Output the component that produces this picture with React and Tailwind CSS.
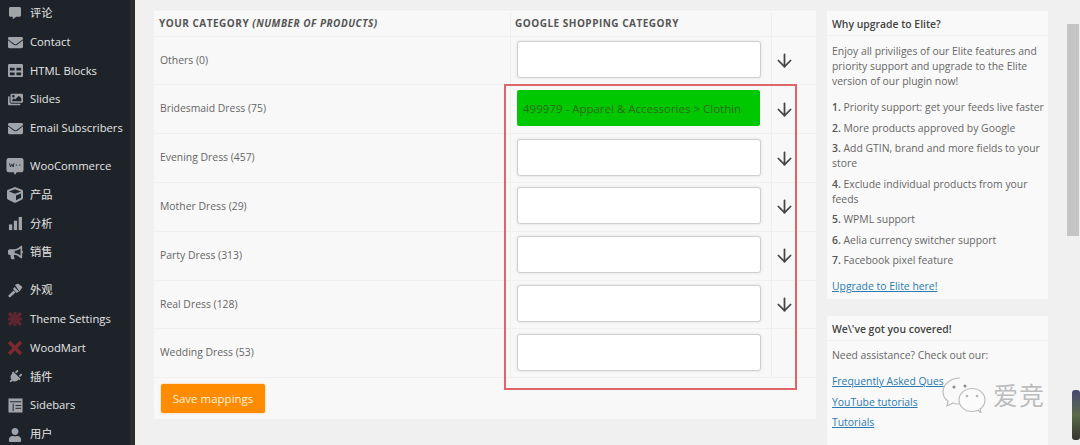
import { ArrowDown } from 'lucide-react';
import { FaCommentAlt, FaEnvelope, FaTable, FaImages, FaCube, FaBullhorn, FaPlug, FaUser } from 'react-icons/fa';

const cjk = "font-['Open_Sans','Noto_Sans_CJK_SC',sans-serif]";

function WooIcon() {
  return (
    <svg viewBox="0 0 20 20" className="h-[18px] w-[18px]" fill="currentColor">
      <path d="M3 1h14a2.500 2.500 0 0 1 2.500 2.500v11A2.500 2.500 0 0 1 17 17h-5l-2 3-1.500-3H3A2.500 2.500 0 0 1 .5 14.500v-11A2.500 2.500 0 0 1 3 1z" />
      <path d="M4 7l1 4 1.500-3 1.500 3 1-4M11 9h1.500M14.500 9H16" stroke="#1f242b" strokeWidth="1" fill="none" />
    </svg>
  );
}

function BarsIcon() {
  return (
    <svg viewBox="0 0 16 16" className="h-[15px] w-[15px]" fill="currentColor">
      <rect x="1" y="9" width="3.500" height="6" />
      <rect x="6.200" y="5" width="3.500" height="10" />
      <rect x="11.400" y="1" width="3.500" height="14" />
    </svg>
  );
}

function BrushIcon() {
  return (
    <svg viewBox="0 0 16 16" className="h-[16px] w-[16px]" fill="currentColor">
      <path d="M8 2l3-1.500 4.500 3.500-3 4.500z" />
      <path d="M7.500 4L12 8.500 9.500 10 6 6z" />
      <path d="M6.500 7.500L8.500 9.500 3 14.500 1 13z" />
    </svg>
  );
}

function SidebarsIcon() {
  return (
    <svg viewBox="0 0 16 16" className="h-[15px] w-[15px]">
      <rect x="0.500" y="0.500" width="15" height="15" fill="#a0a4a8" />
      <path d="M2 4h12M5.500 6v8M8 8h6M8 11h6" stroke="#1f242b" strokeWidth="1" fill="none" />
    </svg>
  );
}

function RedMark({ filled }) {
  return (
    <svg viewBox="0 0 16 16" className="h-[16px] w-[16px]" fill="none" stroke={filled ? '#5e2630' : '#7a2a30'} strokeWidth="3.500">
      <path d="M2 2l12 12M14 2L2 14" />
      {filled && <path d="M8 1v14M1 8h14" strokeWidth="3" />}
    </svg>
  );
}

const menuGroups = [
  [
    { label: '评论', icon: <FaCommentAlt size={12} /> },
    { label: 'Contact', icon: <FaEnvelope size={15} /> },
    { label: 'HTML Blocks', icon: <FaTable size={15} /> },
    { label: 'Slides', icon: <FaImages size={15} /> },
    { label: 'Email Subscribers', icon: <FaEnvelope size={15} /> },
  ],
  [
    { label: 'WooCommerce', icon: <WooIcon /> },
    { label: '产品', icon: <FaCube size={16} /> },
    { label: '分析', icon: <BarsIcon /> },
    { label: '销售', icon: <FaBullhorn size={15} /> },
  ],
  [
    { label: '外观', icon: <BrushIcon /> },
    { label: 'Theme Settings', icon: <RedMark filled /> },
    { label: 'WoodMart', icon: <RedMark /> },
    { label: '插件', icon: <FaPlug size={14} className="rotate-45" /> },
    { label: 'Sidebars', icon: <SidebarsIcon /> },
    { label: '用户', icon: <FaUser size={14} /> },
  ],
];

const rows = [
  { name: 'Others (0)', arrow: true },
  { name: 'Bridesmaid Dress (75)', arrow: true, value: '499979 - Apparel & Accessories > Clothin' },
  { name: 'Evening Dress (457)', arrow: true },
  { name: 'Mother Dress (29)', arrow: true },
  { name: 'Party Dress (313)', arrow: true },
  { name: 'Real Dress (128)', arrow: true },
  { name: 'Wedding Dress (53)', arrow: false },
];

const features = [
  ['1.', 'Priority support: get your feeds live faster'],
  ['2.', 'More products approved by Google'],
  ['3.', 'Add GTIN, brand and more fields to your store'],
  ['4.', 'Exclude individual products from your feeds'],
  ['5.', 'WPML support'],
  ['6.', 'Aelia currency switcher support'],
  ['7.', 'Facebook pixel feature'],
];

function Sidebar() {
  return (
    <aside className="h-full w-[135px] shrink-0 overflow-hidden border-r-[5px] border-[#2c2c2a] bg-[#1e2329]">
      <div className="-mt-[1px] flex flex-col gap-[9px]">
        {menuGroups.map((group, i) => (
          <div key={i} className="flex flex-col">
            {group.map((item) => (
              <div key={item.label} className="flex h-[28.800px] items-center text-[11.250px] text-[#e4e5e6]">
                <span className="flex w-[30px] shrink-0 items-center justify-center pl-[1px] pr-[1px] text-[#a0a4a8]">{item.icon}</span>
                <span className="whitespace-nowrap">{item.label}</span>
              </div>
            ))}
          </div>
        ))}
      </div>
    </aside>
  );
}

function MappingTable() {
  return (
    <div className="w-[662px] shrink-0 border-t border-[#fbfbfb] bg-[#f8f8f8] pb-[6px]">
      <div className="flex h-[24.600px] border-b border-[#f0f0f0] text-[10px] font-bold tracking-[0.500px] text-[#555]">
        <div className="flex w-[356px] items-center pl-[5px]">
          YOUR CATEGORY&nbsp;<em>(NUMBER OF PRODUCTS)</em>
        </div>
        <div className="flex w-[262px] items-center border-x border-[#efefef] pl-[4px]">GOOGLE SHOPPING CATEGORY</div>
        <div className="flex-1" />
      </div>
      {rows.map((row) => (
        <div key={row.name} className="flex h-[48.800px] border-b border-[#f0f0f0] text-[10.400px] text-[#666]">
          <div className="flex w-[356px] items-center pl-[6px]">{row.name}</div>
          <div className="flex w-[262px] items-center border-x border-[#efefef] pb-[2px] pl-[6px]">
            {row.value ? (
              <div className="flex h-[36px] w-[243px] items-center overflow-hidden whitespace-nowrap rounded-[2px] bg-[#00c800] pl-[6px] text-[11.500px] text-[#2f6b18]">
                {row.value}
              </div>
            ) : (
              <div className="h-[37px] w-[244px] rounded-[3px] border border-[#cfcfcf] bg-white shadow-[0_0_3px_#ddd]" />
            )}
          </div>
          <div className="flex flex-1 items-center pl-[2px]">
            {row.arrow && <ArrowDown size={21} strokeWidth={2} className="text-[#444]" />}
          </div>
        </div>
      ))}
      <button className="ml-[7px] mt-[5.500px] h-[29px] w-[104px] rounded-[2px] bg-[#ff8c00] text-[11.500px] text-[#fff3dc] shadow-[0_0_2px_#ffb860]">
        Save mappings
      </button>
    </div>
  );
}

function Card({ title, children, className }) {
  return (
    <div className={`bg-[#f9f9f9] ${className}`}>
      <div className="flex h-[25px] items-center border-b border-[#f0f0f0] pl-[5px] pt-[3px] text-[10.400px] font-semibold text-[#444]">{title}</div>
      <div className="pl-[5px] pt-[7px] text-[10.400px] leading-[15px] text-[#666]">{children}</div>
    </div>
  );
}

function RightColumn() {
  const linkClass = 'block text-[#2b7bb0] underline';
  return (
    <div className="flex w-[221px] shrink-0 flex-col gap-[17px]">
      <Card title="Why upgrade to Elite?" className="h-[288px]">
        <p className="mb-[11px] pt-[1px]">Enjoy all priviliges of our Elite features and priority support and upgrade to the Elite version of our plugin now!</p>
        {features.map(([num, text]) => (
          <p key={num} className="mb-[5.500px]">
            <strong className="font-semibold text-[#555]">{num}</strong> {text}
          </p>
        ))}
        <a className={`${linkClass} mt-[11px]`}>Upgrade to Elite here!</a>
      </Card>
      <Card title={"We\\'ve got you covered!"} className="h-[160px]">
        <p className="mb-[11px]">Need assistance? Check out our:</p>
        <a className={`${linkClass} mb-[5.500px]`}>Frequently Asked Ques</a>
        <a className={`${linkClass} mb-[5.500px]`}>YouTube tutorials</a>
        <a className={linkClass}>Tutorials</a>
      </Card>
    </div>
  );
}

function Watermark() {
  return (
    <div className="absolute left-[942px] top-[377px] flex items-center gap-[7px]">
      <svg viewBox="0 0 44 36" className="h-[36px] w-[44px]" fill="none" stroke="#bdbdbd" strokeWidth="1.200">
        <path d="M18 1C9 1 1 7 1 15c0 4 2 7 5 9l-1 5 6-3c2 1 4 1 6 1" fill="#f9f9f9" />
        <ellipse cx="30" cy="23" rx="13" ry="11.500" fill="#fbfbfb" />
        <path d="M36 33l3 3-1-5" fill="#fbfbfb" />
        <circle cx="12" cy="10" r="1.500" fill="#8a8a8a" stroke="none" />
        <circle cx="23" cy="9" r="1.500" fill="#8a8a8a" stroke="none" />
        <circle cx="25" cy="19" r="1.300" fill="#b5b5b5" stroke="none" />
        <circle cx="35" cy="19" r="1.300" fill="#b5b5b5" stroke="none" />
      </svg>
      <span className="text-[25px] leading-none tracking-[1px] text-[#bcbcbc]">爱竞</span>
    </div>
  );
}

export default function App() {
  return (
    <div className={`relative flex h-[445px] w-[1080px] overflow-hidden bg-[#f0f0f0] ${cjk}`}>
      <Sidebar />
      <div className="flex flex-1 items-start gap-[11px] pl-[19px] pt-[11px]">
        <MappingTable />
        <RightColumn />
      </div>
      <div className="absolute left-[1067px] top-[24px] h-[212px] w-[12px] bg-[#c4c4c4]" />
      <div className="absolute left-[1072px] top-[390px] h-[50px] w-[8px] rounded-[3px] bg-gradient-to-b from-[#46496e] via-[#5a6a4a] to-[#35352e]" />
      <div className="absolute left-[504px] top-[84px] h-[306px] w-[293px] border-2 border-[#e0656a]" />
      <Watermark />
    </div>
  );
}
